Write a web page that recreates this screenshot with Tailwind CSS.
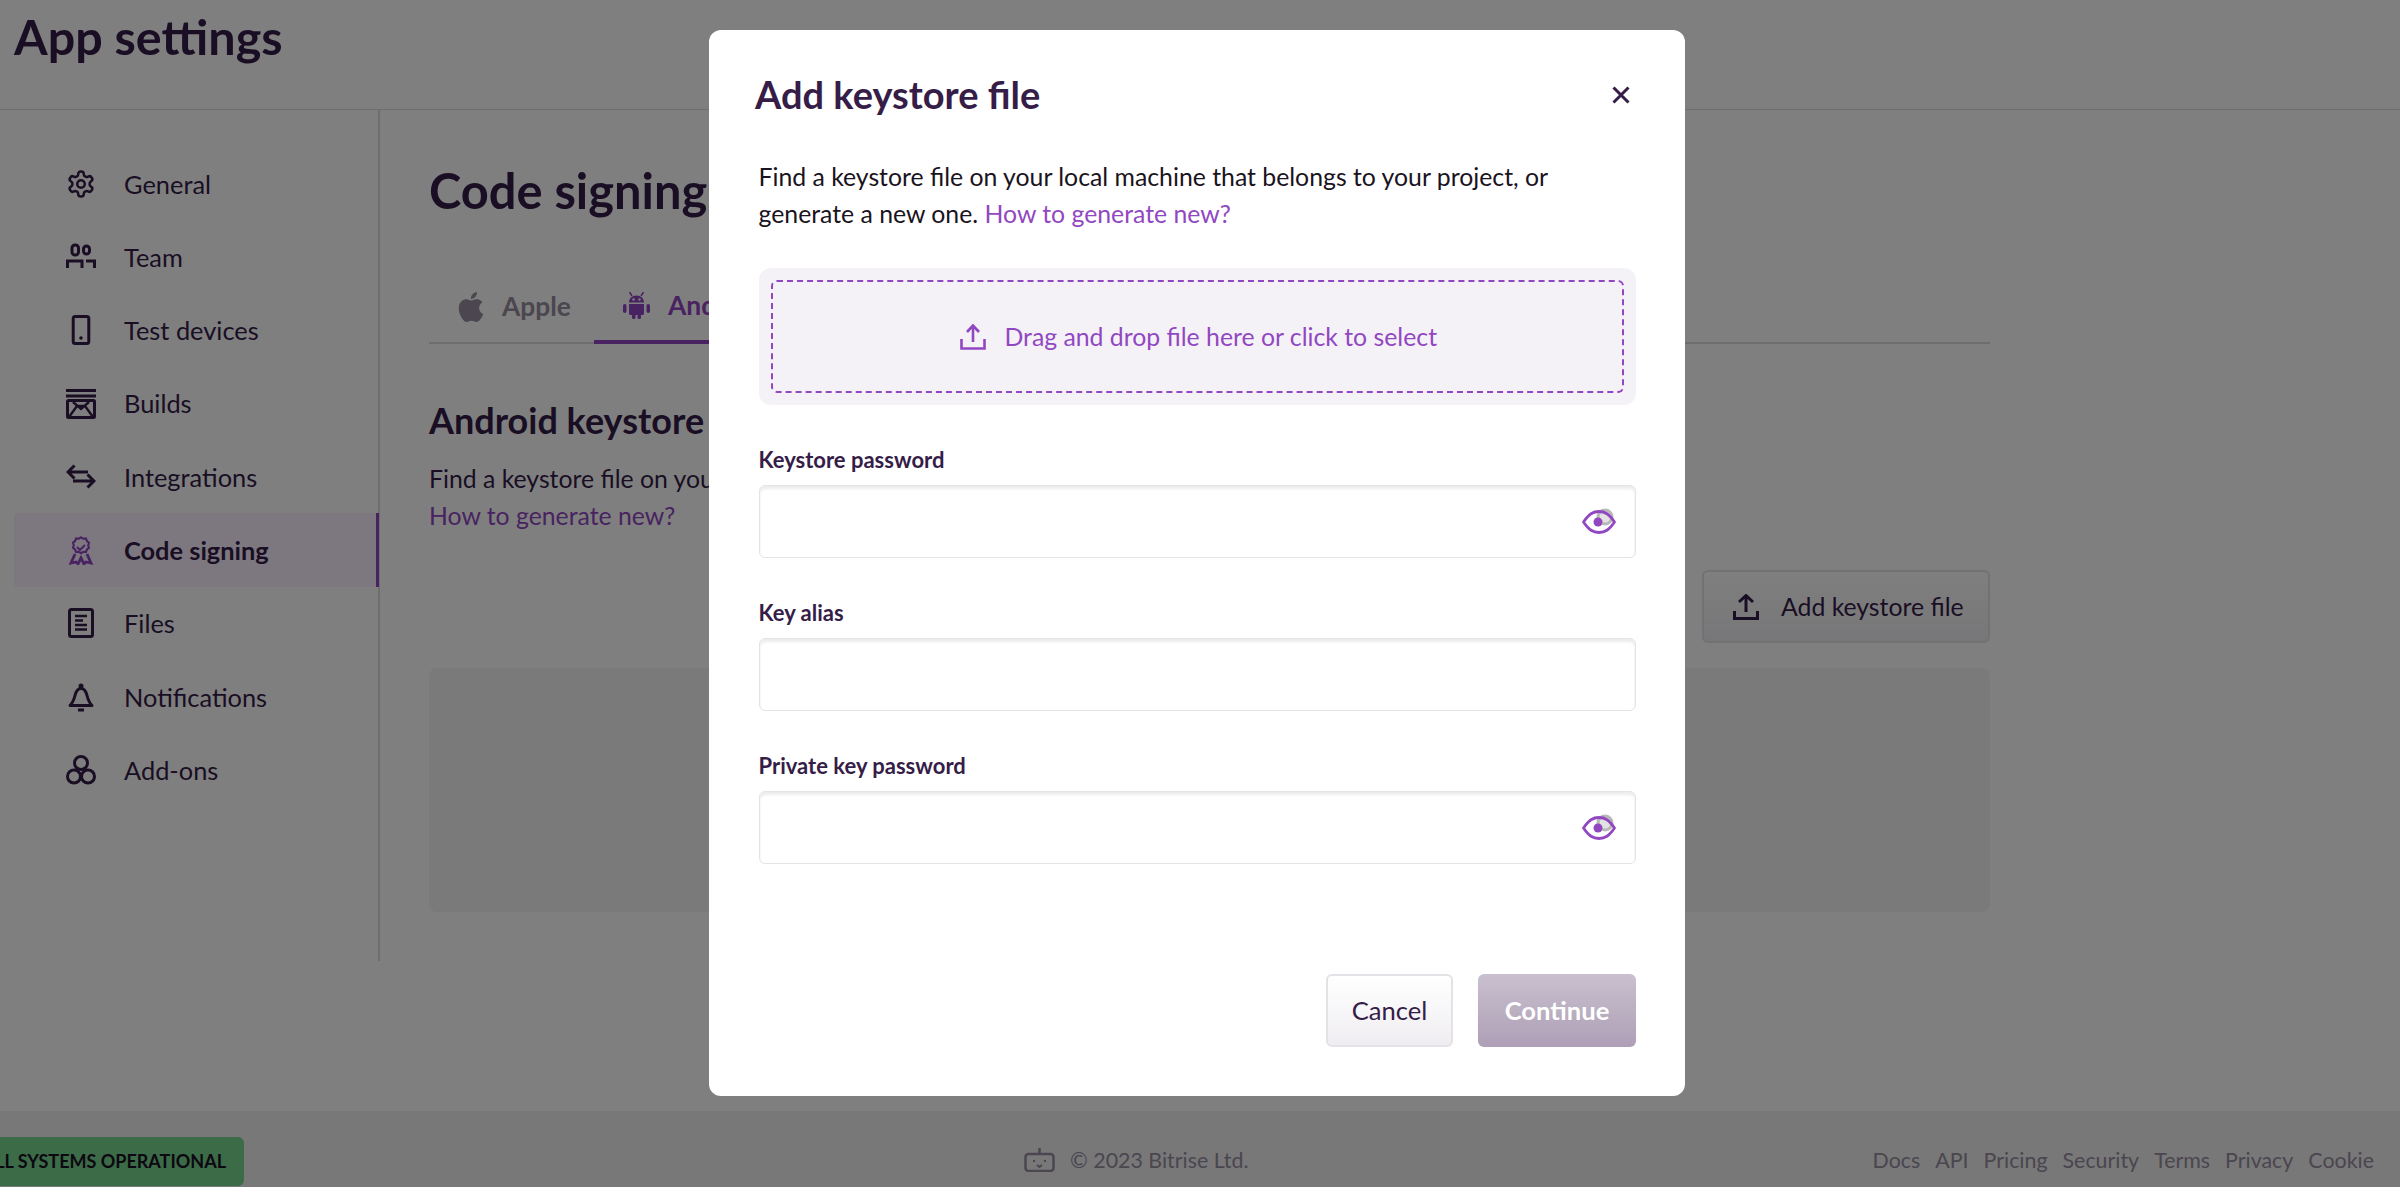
<!DOCTYPE html>
<html lang="en">
<head>
    <meta charset="UTF-8">
    <meta name="viewport" content="width=device-width, initial-scale=1.0">
    <title>App settings - Code signing</title>
    <script src="https://cdn.jsdelivr.net/npm/@tailwindcss/browser@4"></script>
</head>
<body class="bg-white text-[#351d48] font-[Lato,sans-serif] h-[1187px] overflow-hidden">

    <div class="h-[1187px] flex flex-col">
        <!-- page title -->
        <header class="h-[110px] shrink-0 border-b border-[#dcdcdc] pl-[14px] pt-[6px]">
            <h1 class="text-[48.5px] leading-[60px] font-bold">App settings</h1>
        </header>

        <div class="flex h-[851px] shrink-0">
            <!-- sidebar -->
            <nav class="w-[380px] shrink-0 border-r-2 border-[#dcdcdc] pt-[37px] pl-[14px] text-[25.4px]">
                <a class="flex items-center h-[73.3px] pl-[52px] gap-[28px]">
                    <svg class="w-[30px] h-[30px]" viewBox="0 0 24 24" fill="none" stroke="currentColor" stroke-width="2"><path d="M12.22 2h-.44a2 2 0 0 0-2 2v.18a2 2 0 0 1-1 1.73l-.43.25a2 2 0 0 1-2 0l-.15-.08a2 2 0 0 0-2.73.73l-.22.38a2 2 0 0 0 .73 2.73l.15.1a2 2 0 0 1 1 1.72v.51a2 2 0 0 1-1 1.74l-.15.09a2 2 0 0 0-.73 2.73l.22.38a2 2 0 0 0 2.73.73l.15-.08a2 2 0 0 1 2 0l.43.25a2 2 0 0 1 1 1.73V20a2 2 0 0 0 2 2h.44a2 2 0 0 0 2-2v-.18a2 2 0 0 1 1-1.73l.43-.25a2 2 0 0 1 2 0l.15.08a2 2 0 0 0 2.73-.73l.22-.39a2 2 0 0 0-.73-2.73l-.15-.08a2 2 0 0 1-1-1.74v-.5a2 2 0 0 1 1-1.74l.15-.09a2 2 0 0 0 .73-2.73l-.22-.38a2 2 0 0 0-2.73-.73l-.15.08a2 2 0 0 1-2 0l-.43-.25a2 2 0 0 1-1-1.73V4a2 2 0 0 0-2-2z"/><circle cx="12" cy="12" r="3"/></svg>
                    General
                </a>
                <a class="flex items-center h-[73.3px] pl-[52px] gap-[28px]">
                    <svg class="w-[30px] h-[30px]" viewBox="0 0 30 30" fill="none" stroke="currentColor" stroke-width="3"><rect x="6" y="3" width="6.5" height="10" rx="3"/><rect x="17.5" y="4" width="6" height="8" rx="3"/><path d="M1.500 26v-7H16v7M20 19h8.500v7"/></svg>
                    Team
                </a>
                <a class="flex items-center h-[73.3px] pl-[52px] gap-[28px]">
                    <svg class="w-[30px] h-[30px]" viewBox="0 0 30 30" fill="none" stroke="currentColor" stroke-width="3"><rect x="7.200" y="1.500" width="15.600" height="27" rx="2"/><circle cx="15" cy="23" r="1.800" fill="currentColor" stroke="none"/></svg>
                    Test devices
                </a>
                <a class="flex items-center h-[73.3px] pl-[52px] gap-[28px]">
                    <svg class="w-[30px] h-[30px]" viewBox="0 0 30 30" fill="none" stroke="currentColor" stroke-width="3"><path d="M0 1.500h30M0 7h30"/><rect x="1.500" y="11.500" width="27" height="17" rx="1"/><path d="M3 28l8-11h8l8 11M7 13l8 7 8-7" stroke-width="2.400"/></svg>
                    Builds
                </a>
                <a class="flex items-center h-[73.3px] pl-[52px] gap-[28px]">
                    <svg class="w-[30px] h-[30px]" viewBox="0 0 30 30" fill="none" stroke="currentColor" stroke-width="3"><path d="M22 10H2M8.500 3.500 2 10l6.500 6.500M7 19h21M21.500 12.500 28 19l-6.500 6.500"/></svg>
                    Integrations
                </a>
                <a class="flex items-center h-[73.3px] pl-[52px] gap-[28px] bg-[#fbf0ff] border-r-[3px] border-[#9247c2] font-bold -mr-px rounded-l-[4px] text-[#351d48]">
                    <svg class="w-[30px] h-[30px] text-[#9247c2]" viewBox="0 0 30 30" fill="none" stroke="currentColor" stroke-width="2.800"><path d="M15 1.500l3 1.800 3.500-.3 1.300 3.300 2.700 2.200-1 3.400 1 3.400-2.700 2.200-1.300 3.300-3.500-.3-3 1.800-3-1.800-3.500.3-1.300-3.300-2.700-2.200 1-3.400-1-3.400 2.700-2.200 1.300-3.300 3.500.3z" transform="translate(3.600 1.200) scale(.76)"/><path d="M11 12l3 3 5-5" stroke-width="2"/><path d="M9 19L5 28l5-1 2 2 3-6 3 6 2-2 5 1-4-9"/></svg>
                    Code signing
                </a>
                <a class="flex items-center h-[73.3px] pl-[52px] gap-[28px]">
                    <svg class="w-[30px] h-[30px]" viewBox="0 0 30 30" fill="none" stroke="currentColor" stroke-width="3"><rect x="3.500" y="1.500" width="23" height="27" rx="2"/><path d="M9 8h12M9 12.500h8M9 17h12M9 21.500h12" stroke-width="2.400"/></svg>
                    Files
                </a>
                <a class="flex items-center h-[73.3px] pl-[52px] gap-[28px]">
                    <svg class="w-[30px] h-[30px]" viewBox="0 0 30 30" fill="none" stroke="currentColor" stroke-width="3"><path d="M4 23.500h22c-3-3-4-6-5-10-1-4-3-7-6-7s-5 3-6 7c-1 4-2 7-5 10z" stroke-linejoin="round"/><circle cx="15" cy="4" r="2.500" fill="currentColor" stroke="none"/><path d="M12 28h6"/></svg>
                    Notifications
                </a>
                <a class="flex items-center h-[73.3px] pl-[52px] gap-[28px]">
                    <svg class="w-[30px] h-[30px]" viewBox="0 0 30 30" fill="none" stroke="currentColor" stroke-width="3"><circle cx="15" cy="8" r="6.500"/><circle cx="8" cy="21.500" r="6.500"/><circle cx="22" cy="21.500" r="6.500"/></svg>
                    Add-ons
                </a>
            </nav>

            <!-- code signing page -->
            <main class="w-[1610px] shrink-0 pl-[49px]">
                <h2 class="text-[48.8px] leading-[60px] font-bold mt-[50px]">Code signing</h2>
                <div class="flex h-[73px] mt-[51px] border-b-2 border-[#dcdcdc] text-[26.4px] font-bold">
                    <div class="flex items-center w-[165px] pl-[27px] gap-[16px] text-[#968c9e]">
                        <svg class="w-[30px] h-[30px]" viewBox="0 0 24 24" fill="currentColor"><path d="M12.152 6.896c-.948 0-2.415-1.078-3.960-1.040-2.040.027-3.910 1.183-4.961 3.014-2.117 3.675-.546 9.103 1.519 12.090 1.013 1.454 2.208 3.090 3.792 3.039 1.520-.065 2.090-.987 3.935-.987 1.831 0 2.350.987 3.960.948 1.637-.026 2.676-1.480 3.676-2.948 1.156-1.688 1.636-3.325 1.662-3.415-.039-.013-3.182-1.221-3.220-4.857-.026-3.040 2.480-4.494 2.597-4.559-1.429-2.090-3.623-2.324-4.390-2.376-2-.156-3.675 1.090-4.610 1.090zM15.530 3.830c.843-1.012 1.400-2.427 1.245-3.830-1.207.052-2.662.805-3.532 1.818-.780.896-1.454 2.338-1.273 3.714 1.338.104 2.715-.688 3.559-1.701"/></svg>
                        Apple
                    </div>
                    <div class="flex items-center pl-[29px] pr-[30px] gap-[18px] text-[#9247c2] border-b-[4px] border-[#9247c2] -mb-[2px]">
                        <svg class="w-[27px] h-[27px]" viewBox="0 0 27 27" fill="currentColor"><path d="M6 10.500C6 6.500 9 3.500 13.500 3.500S21 6.500 21 10.500zM6 12h15v9.500a1.500 1.500 0 0 1-1.500 1.500h-12A1.500 1.500 0 0 1 6 21.500z"/><path d="M6.500 0l2.500 4M20.500 0L18 4" stroke="currentColor" stroke-width="1.500"/><rect x="0" y="12" width="3.500" height="9" rx="1.700"/><rect x="23.500" y="12" width="3.500" height="9" rx="1.700"/><rect x="9" y="22" width="3.500" height="5" rx="1.500"/><rect x="14.500" y="22" width="3.500" height="5" rx="1.500"/><circle cx="10.500" cy="7.500" r="1.200" fill="#fff"/><circle cx="16.500" cy="7.500" r="1.200" fill="#fff"/></svg>
                        Android
                    </div>
                </div>
                <h3 class="text-[36px] leading-[44px] font-bold mt-[54px]">Android keystore file</h3>
                <p class="text-[24.8px] leading-[37px] mt-[18px]">Find a keystore file on your local machine that belongs to your project, or generate a new one.<br><a class="text-[#9247c2]">How to generate new?</a></p>
                <div class="flex justify-end mt-[36px]">
                    <button class="flex items-center w-[288px] h-[73px] pl-[29px] gap-[22px] text-[24.8px] rounded-[6px] border-2 border-[#e4e2e6] bg-gradient-to-b from-white to-[#efedf1]">
                        <svg class="w-[26px] h-[26px]" viewBox="0 0 26 26" fill="none" stroke="currentColor" stroke-width="3"><path d="M13 18V2M6 8l7-6.500L20 8M1.500 17v7.500h23V17"/></svg>
                        Add keystore file
                    </button>
                </div>
                <div class="h-[244px] mt-[25px] bg-[#f4f4f4] rounded-[8px]"></div>
            </main>
        </div>

        <!-- footer -->
        <footer class="mt-auto h-[76px] shrink-0 bg-[#f0f0f0] flex items-center pr-[26px] text-[21.4px] text-[#968c9e]">
            <div class="flex items-center justify-end h-[49px] w-[244px] mt-[24px] pr-[18px] rounded-r-[6px] bg-[#76d68e] text-[#1a0e24] text-[18px] font-bold whitespace-nowrap overflow-hidden">ALL SYSTEMS OPERATIONAL</div>
            <div class="ml-[780px] mt-[22px] flex items-center gap-[15px]">
                <svg class="w-[31px] h-[24px]" viewBox="0 0 31 24" fill="none" stroke="currentColor" stroke-width="2.500"><rect x="1.500" y="6" width="28" height="17" rx="3"/><path d="M15.500 0v5"/><path d="M10 12v2M21 12v2M13 17l2.500 2 2.500-2" stroke-width="2"/></svg>
                <span>© 2023 Bitrise Ltd.</span>
            </div>
            <div class="ml-auto flex gap-[15px] mt-[22px]">
                <a>Docs</a><a>API</a><a>Pricing</a><a>Security</a><a>Terms</a><a>Privacy</a><a>Cookie</a>
            </div>
        </footer>
    </div>

    <!-- modal -->
    <div class="fixed inset-0 bg-black/50 flex justify-center items-start pt-[30px] pr-[6px]">
        <div class="w-[976px] h-[1066px] bg-white rounded-[12px] flex flex-col pt-[35px] pb-[49px] pl-[49.5px] pr-[49px]">
            <div class="flex items-center justify-between h-[58px] pr-[6px]">
                <h2 class="text-[38px] font-bold -ml-[3.5px]">Add keystore file</h2>
                <svg class="w-[18px] h-[18px] mt-[2px]" viewBox="0 0 18 18" fill="none" stroke="#351d48" stroke-width="3"><path d="M1.500 1.500l15 15M16.500 1.500l-15 15"/></svg>
            </div>
            <p class="text-[24.8px] leading-[37px] mt-[35px] text-[#1a1320]">Find a keystore file on your local machine that belongs to your project, or<br>generate a new one. <a class="text-[#9247c2]">How to generate new?</a></p>
            <div class="mt-[36px] h-[137px] p-[12px] bg-[#f4f2f6] rounded-[12px]">
                <div class="h-full flex items-center justify-center gap-[18px] pl-[3px] border-2 border-dashed border-[#9247c2] rounded-[6px] text-[24.8px] text-[#9247c2]">
                    <svg class="w-[26px] h-[26px]" viewBox="0 0 26 26" fill="none" stroke="currentColor" stroke-width="2.600"><path d="M13 18V2M7 8l6-6.500L19 8M1.500 15v9.500h23V15"/></svg>
                    Drag and drop file here or click to select
                </div>
            </div>

            <label class="mt-[40px] h-[30px] leading-[30px] text-[22px] font-bold">Keystore password</label>
            <div class="mt-[10px] h-[73px] flex items-center pr-[19px] rounded-[6px] border-[1.5px] border-[#e4e4e4] shadow-[inset_0_3px_3px_rgba(0,0,0,0.08)]">
                <input type="password" class="flex-1 h-full outline-none bg-transparent">
                <svg class="w-[34px] h-[30px] mt-[1px]" viewBox="0 0 34 30" fill="none"><circle cx="23" cy="10" r="7" fill="#e2e2e2" stroke="#b8b8b8" stroke-width="3"/><path d="M1.500 15C7 7 11 4.500 17 4.500S27 7 32.500 15C27 23 23 25.500 17 25.500S7 23 1.500 15z" stroke="#9247c2" stroke-width="2.800" stroke-linejoin="round"/><circle cx="16" cy="15" r="4.500" fill="#9247c2"/></svg>
            </div>

            <label class="mt-[40px] h-[30px] leading-[30px] text-[22px] font-bold">Key alias</label>
            <div class="mt-[10px] h-[73px] flex items-center pr-[19px] rounded-[6px] border-[1.5px] border-[#e4e4e4] shadow-[inset_0_3px_3px_rgba(0,0,0,0.08)]">
                <input type="text" class="flex-1 h-full outline-none bg-transparent">
            </div>

            <label class="mt-[40px] h-[30px] leading-[30px] text-[22px] font-bold">Private key password</label>
            <div class="mt-[10px] h-[73px] flex items-center pr-[19px] rounded-[6px] border-[1.5px] border-[#e4e4e4] shadow-[inset_0_3px_3px_rgba(0,0,0,0.08)]">
                <input type="password" class="flex-1 h-full outline-none bg-transparent">
                <svg class="w-[34px] h-[30px] mt-[1px]" viewBox="0 0 34 30" fill="none"><circle cx="23" cy="10" r="7" fill="#e2e2e2" stroke="#b8b8b8" stroke-width="3"/><path d="M1.500 15C7 7 11 4.500 17 4.500S27 7 32.500 15C27 23 23 25.500 17 25.500S7 23 1.500 15z" stroke="#9247c2" stroke-width="2.800" stroke-linejoin="round"/><circle cx="16" cy="15" r="4.500" fill="#9247c2"/></svg>
            </div>

            <div class="mt-auto flex justify-end gap-[25px] text-[25.6px]">
                <button class="w-[127px] h-[73px] rounded-[6px] border-2 border-[#e4e2e6] bg-gradient-to-b from-white to-[#efedf1]">Cancel</button>
                <button class="w-[158px] h-[73px] rounded-[6px] bg-gradient-to-b from-[#c9c0cf] to-[#ae9fb6] text-white font-bold">Continue</button>
            </div>
        </div>
    </div>

</body>
</html>
